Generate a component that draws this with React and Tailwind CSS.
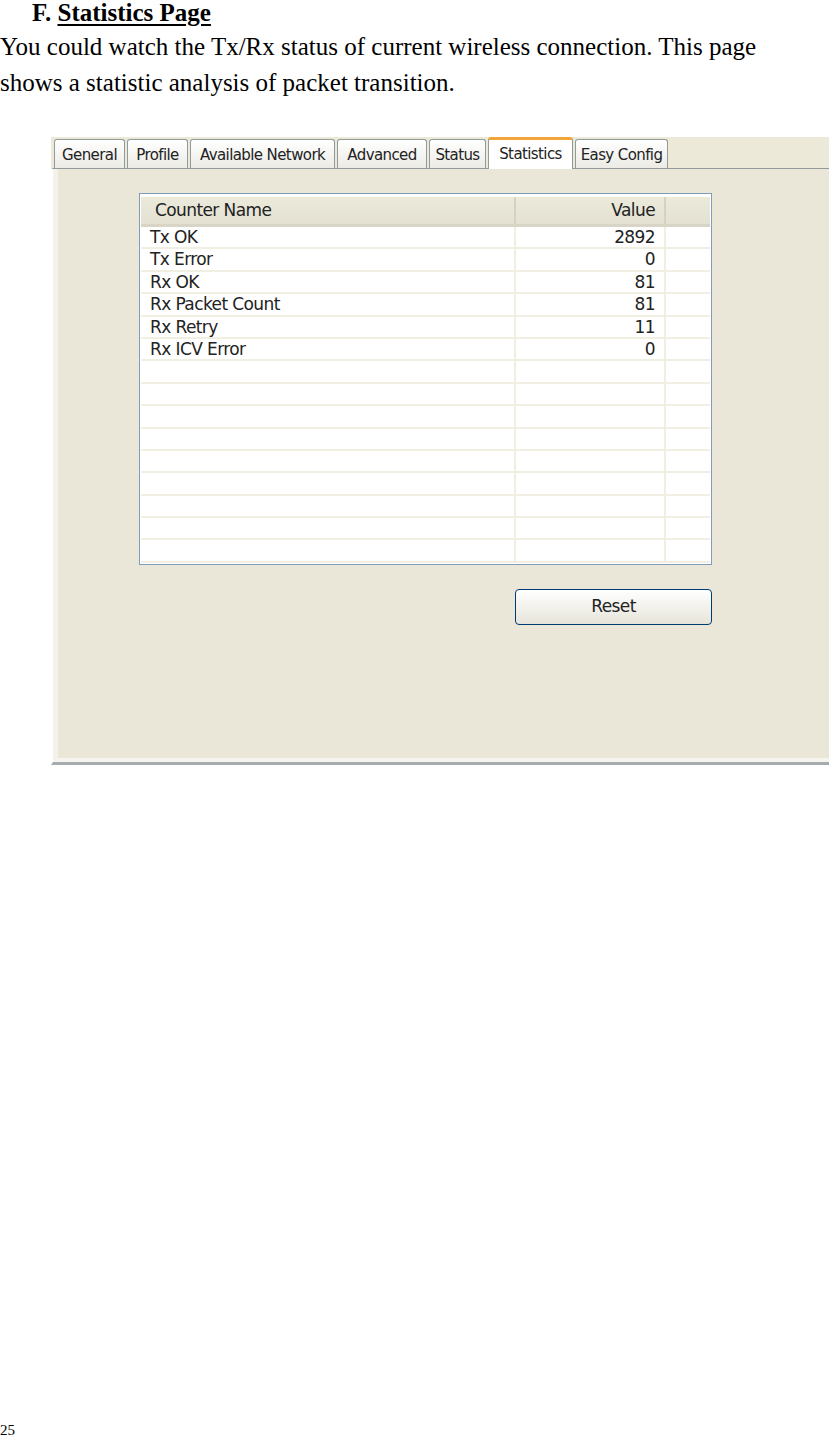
import React from 'react';

const tabs = [
  { label: 'General', w: 'w-[71px]' },
  { label: 'Profile', w: 'w-[61px]' },
  { label: 'Available Network', w: 'w-[145px]' },
  { label: 'Advanced', w: 'w-[90px]' },
  { label: 'Status', w: 'w-[57px]' },
  { label: 'Statistics', w: 'w-[85px]', active: true },
  { label: 'Easy Config', w: 'w-[93px]' },
];

const rows = [
  ['Tx OK', '2892'],
  ['Tx Error', '0'],
  ['Rx OK', '81'],
  ['Rx Packet Count', '81'],
  ['Rx Retry', '11'],
  ['Rx ICV Error', '0'],
  ['', ''],
  ['', ''],
  ['', ''],
  ['', ''],
  ['', ''],
  ['', ''],
  ['', ''],
  ['', ''],
  ['', ''],
];

function Tab({ label, w, active }) {
  if (active) {
    return (
      <div
        className={`${w} h-[32px] -mb-[1px] relative z-10 flex items-start justify-center pt-[3px] bg-white border border-b-0 border-[#919B9C] border-t-[3px] border-t-[#F2A63A] rounded-t-[3px] text-[#222]`}
      >
        {label}
      </div>
    );
  }
  return (
    <div
      className={`${w} h-[29px] flex items-center justify-center pt-[2px] bg-gradient-to-b from-white to-[#ECEBE5] border border-b-0 border-[#919B9C] rounded-t-[3px] text-[#222]`}
    >
      {label}
    </div>
  );
}

export default function App() {
  return (
    <div className="min-h-[1441px] flex flex-col bg-white text-black font-['Liberation_Serif',serif]">
      {/* Heading */}
      <h2 className="pl-[32px] text-[25px] leading-[25px] font-bold">
        F. <span className="underline underline-offset-[3px] decoration-2">Statistics Page</span>
      </h2>
      <p className="mt-[4px] text-[25px] leading-[36px] w-[790px]">
        You could watch the Tx/Rx status of current wireless connection. This page shows a statistic analysis of packet transition.
      </p>

      {/* Screenshot of the utility */}
      <div className="mt-[36px] ml-[51px] w-[778px] h-[628px] flex flex-col bg-[#ECE9D8] font-['DejaVu_Sans',sans-serif] text-[15px] tracking-[-0.6px]">
        <div className="flex items-end gap-[2px] pl-[3px] h-[31px]">
          {tabs.map((t) => (
            <Tab key={t.label} {...t} />
          ))}
        </div>
        <div className="flex-1 flex flex-col border-t border-[#919B9C] border-l-2 border-l-white border-b-[3px] border-b-[#A5ACAF] bg-[#EBE7D8]">
          <div className="flex-1 flex flex-col border-l-[5px] border-l-[#F3F1EA] border-b-[4px] border-b-[#F5F4EE] pl-[81px] pt-[24px]">
            {/* List box */}
            <div className="w-[573px] border border-[#7F9DB9] bg-white p-[1px] pt-[3px] text-[17px]">
              <div className="flex h-[30px] bg-gradient-to-b from-[#EBEADB] to-[#E4E1D3] border-b-[3px] border-b-[#D9D5C6] text-[#222]">
                <div className="w-[375px] pl-[14px] flex items-center border-r-2 border-r-[#D6D2C2]">Counter Name</div>
                <div className="w-[150px] pr-[9px] flex items-center justify-end border-r-2 border-r-[#D6D2C2]">Value</div>
                <div className="flex-1" />
              </div>
              {rows.map(([name, val], i) => (
                <div key={i} className="flex h-[22.4px] border-b-2 border-b-[#F1EEE2] text-[#222] leading-[20px]">
                  <div className="w-[375px] pl-[9px] border-r-2 border-r-[#F1EEE2]">{name}</div>
                  <div className="w-[150px] pr-[9px] text-right border-r-2 border-r-[#F1EEE2]">{val}</div>
                  <div className="flex-1" />
                </div>
              ))}
            </div>

            {/* Reset button */}
            <div className="w-[573px] flex justify-end mt-[24px]">
              <button className="w-[197px] h-[36px] rounded-[4px] border border-[#003C74] bg-gradient-to-b from-white to-[#E6E4DA] text-[#222] text-[17px]">
                Reset
              </button>
            </div>
          </div>
        </div>
      </div>

      <div className="mt-auto pb-[2px] text-[15px] leading-[18px]">25</div>
    </div>
  );
}
